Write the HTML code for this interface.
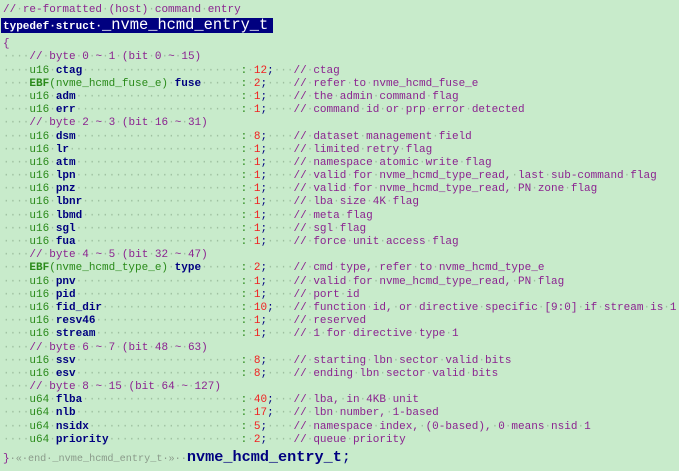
<!DOCTYPE html>
<html><head><meta charset="utf-8"><style>
body{margin:0;width:679px;height:471px;background:#c8ebcb;overflow:hidden;font-family:"Liberation Mono",monospace;font-size:11px;}
.w{position:absolute;left:3px;top:4px;}
.w>div{white-space:pre;}
.l{height:13.2px;line-height:13.2px;}
.c{color:#8b2390}
i{font-style:normal;color:#9dbf9f}
.t{color:#2a8a1a}
.tb{color:#2a8a1a;font-weight:bold}
.n{color:#000080;font-weight:bold}
.k{color:#2a8a1a}
.r{color:#f02020}
.s{color:#000080}
.hl{display:inline-block;background:#000080;color:#fff;height:15px;line-height:15px;padding-right:5px;margin-left:-2px;padding-left:2px}
.hl b{font-size:11px}
.big{font-size:15.4px;font-weight:normal}
.e{color:#8a9a8a;font-size:10.2px}
.bn{color:#000080;font-weight:bold;font-size:15.2px}
</style></head><body><div class="w">
<div class="l c">//<i>·</i>re-formatted<i>·</i>(host)<i>·</i>command<i>·</i>entry</div>
<div style="height:21px;padding-top:1px;box-sizing:border-box"><span class="hl"><b>typedef·struct·</b><span class="big">_nvme_hcmd_entry_t</span></span></div>
<div class="l c">{</div>
<div class="l"><i>····</i><span class="c">//<i>·</i>byte<i>·</i>0<i>·</i>~<i>·</i>1<i>·</i>(bit<i>·</i>0<i>·</i>~<i>·</i>15)</span></div>
<div class="l"><i>····</i><span class="t">u16</span><i>·</i><span class="n">ctag</span><i>························</i><span class="k">:</span><i>·</i><span class="r">12</span><span class="s">;</span><i>···</i><span class="c">//<i>·</i>ctag</span></div>
<div class="l"><i>····</i><span class="tb">EBF</span><span class="t">(nvme_hcmd_fuse_e)</span><i>·</i><span class="n">fuse</span><i>······</i><span class="k">:</span><i>·</i><span class="r">2</span><span class="s">;</span><i>····</i><span class="c">//<i>·</i>refer<i>·</i>to<i>·</i>nvme_hcmd_fuse_e</span></div>
<div class="l"><i>····</i><span class="t">u16</span><i>·</i><span class="n">adm</span><i>·························</i><span class="k">:</span><i>·</i><span class="r">1</span><span class="s">;</span><i>····</i><span class="c">//<i>·</i>the<i>·</i>admin<i>·</i>command<i>·</i>flag</span></div>
<div class="l"><i>····</i><span class="t">u16</span><i>·</i><span class="n">err</span><i>·························</i><span class="k">:</span><i>·</i><span class="r">1</span><span class="s">;</span><i>····</i><span class="c">//<i>·</i>command<i>·</i>id<i>·</i>or<i>·</i>prp<i>·</i>error<i>·</i>detected</span></div>
<div class="l"><i>····</i><span class="c">//<i>·</i>byte<i>·</i>2<i>·</i>~<i>·</i>3<i>·</i>(bit<i>·</i>16<i>·</i>~<i>·</i>31)</span></div>
<div class="l"><i>····</i><span class="t">u16</span><i>·</i><span class="n">dsm</span><i>·························</i><span class="k">:</span><i>·</i><span class="r">8</span><span class="s">;</span><i>····</i><span class="c">//<i>·</i>dataset<i>·</i>management<i>·</i>field</span></div>
<div class="l"><i>····</i><span class="t">u16</span><i>·</i><span class="n">lr</span><i>··························</i><span class="k">:</span><i>·</i><span class="r">1</span><span class="s">;</span><i>····</i><span class="c">//<i>·</i>limited<i>·</i>retry<i>·</i>flag</span></div>
<div class="l"><i>····</i><span class="t">u16</span><i>·</i><span class="n">atm</span><i>·························</i><span class="k">:</span><i>·</i><span class="r">1</span><span class="s">;</span><i>····</i><span class="c">//<i>·</i>namespace<i>·</i>atomic<i>·</i>write<i>·</i>flag</span></div>
<div class="l"><i>····</i><span class="t">u16</span><i>·</i><span class="n">lpn</span><i>·························</i><span class="k">:</span><i>·</i><span class="r">1</span><span class="s">;</span><i>····</i><span class="c">//<i>·</i>valid<i>·</i>for<i>·</i>nvme_hcmd_type_read,<i>·</i>last<i>·</i>sub-command<i>·</i>flag</span></div>
<div class="l"><i>····</i><span class="t">u16</span><i>·</i><span class="n">pnz</span><i>·························</i><span class="k">:</span><i>·</i><span class="r">1</span><span class="s">;</span><i>····</i><span class="c">//<i>·</i>valid<i>·</i>for<i>·</i>nvme_hcmd_type_read,<i>·</i>PN<i>·</i>zone<i>·</i>flag</span></div>
<div class="l"><i>····</i><span class="t">u16</span><i>·</i><span class="n">lbnr</span><i>························</i><span class="k">:</span><i>·</i><span class="r">1</span><span class="s">;</span><i>····</i><span class="c">//<i>·</i>lba<i>·</i>size<i>·</i>4K<i>·</i>flag</span></div>
<div class="l"><i>····</i><span class="t">u16</span><i>·</i><span class="n">lbmd</span><i>························</i><span class="k">:</span><i>·</i><span class="r">1</span><span class="s">;</span><i>····</i><span class="c">//<i>·</i>meta<i>·</i>flag</span></div>
<div class="l"><i>····</i><span class="t">u16</span><i>·</i><span class="n">sgl</span><i>·························</i><span class="k">:</span><i>·</i><span class="r">1</span><span class="s">;</span><i>····</i><span class="c">//<i>·</i>sgl<i>·</i>flag</span></div>
<div class="l"><i>····</i><span class="t">u16</span><i>·</i><span class="n">fua</span><i>·························</i><span class="k">:</span><i>·</i><span class="r">1</span><span class="s">;</span><i>····</i><span class="c">//<i>·</i>force<i>·</i>unit<i>·</i>access<i>·</i>flag</span></div>
<div class="l"><i>····</i><span class="c">//<i>·</i>byte<i>·</i>4<i>·</i>~<i>·</i>5<i>·</i>(bit<i>·</i>32<i>·</i>~<i>·</i>47)</span></div>
<div class="l"><i>····</i><span class="tb">EBF</span><span class="t">(nvme_hcmd_type_e)</span><i>·</i><span class="n">type</span><i>······</i><span class="k">:</span><i>·</i><span class="r">2</span><span class="s">;</span><i>····</i><span class="c">//<i>·</i>cmd<i>·</i>type,<i>·</i>refer<i>·</i>to<i>·</i>nvme_hcmd_type_e</span></div>
<div class="l"><i>····</i><span class="t">u16</span><i>·</i><span class="n">pnv</span><i>·························</i><span class="k">:</span><i>·</i><span class="r">1</span><span class="s">;</span><i>····</i><span class="c">//<i>·</i>valid<i>·</i>for<i>·</i>nvme_hcmd_type_read,<i>·</i>PN<i>·</i>flag</span></div>
<div class="l"><i>····</i><span class="t">u16</span><i>·</i><span class="n">pid</span><i>·························</i><span class="k">:</span><i>·</i><span class="r">1</span><span class="s">;</span><i>····</i><span class="c">//<i>·</i>port<i>·</i>id</span></div>
<div class="l"><i>····</i><span class="t">u16</span><i>·</i><span class="n">fid_dir</span><i>·····················</i><span class="k">:</span><i>·</i><span class="r">10</span><span class="s">;</span><i>···</i><span class="c">//<i>·</i>function<i>·</i>id,<i>·</i>or<i>·</i>directive<i>·</i>specific<i>·</i>[9:0]<i>·</i>if<i>·</i>stream<i>·</i>is<i>·</i>1</span></div>
<div class="l"><i>····</i><span class="t">u16</span><i>·</i><span class="n">resv46</span><i>······················</i><span class="k">:</span><i>·</i><span class="r">1</span><span class="s">;</span><i>····</i><span class="c">//<i>·</i>reserved</span></div>
<div class="l"><i>····</i><span class="t">u16</span><i>·</i><span class="n">stream</span><i>······················</i><span class="k">:</span><i>·</i><span class="r">1</span><span class="s">;</span><i>····</i><span class="c">//<i>·</i>1<i>·</i>for<i>·</i>directive<i>·</i>type<i>·</i>1</span></div>
<div class="l"><i>····</i><span class="c">//<i>·</i>byte<i>·</i>6<i>·</i>~<i>·</i>7<i>·</i>(bit<i>·</i>48<i>·</i>~<i>·</i>63)</span></div>
<div class="l"><i>····</i><span class="t">u16</span><i>·</i><span class="n">ssv</span><i>·························</i><span class="k">:</span><i>·</i><span class="r">8</span><span class="s">;</span><i>····</i><span class="c">//<i>·</i>starting<i>·</i>lbn<i>·</i>sector<i>·</i>valid<i>·</i>bits</span></div>
<div class="l"><i>····</i><span class="t">u16</span><i>·</i><span class="n">esv</span><i>·························</i><span class="k">:</span><i>·</i><span class="r">8</span><span class="s">;</span><i>····</i><span class="c">//<i>·</i>ending<i>·</i>lbn<i>·</i>sector<i>·</i>valid<i>·</i>bits</span></div>
<div class="l"><i>····</i><span class="c">//<i>·</i>byte<i>·</i>8<i>·</i>~<i>·</i>15<i>·</i>(bit<i>·</i>64<i>·</i>~<i>·</i>127)</span></div>
<div class="l"><i>····</i><span class="t">u64</span><i>·</i><span class="n">flba</span><i>························</i><span class="k">:</span><i>·</i><span class="r">40</span><span class="s">;</span><i>···</i><span class="c">//<i>·</i>lba,<i>·</i>in<i>·</i>4KB<i>·</i>unit</span></div>
<div class="l"><i>····</i><span class="t">u64</span><i>·</i><span class="n">nlb</span><i>·························</i><span class="k">:</span><i>·</i><span class="r">17</span><span class="s">;</span><i>···</i><span class="c">//<i>·</i>lbn<i>·</i>number,<i>·</i>1-based</span></div>
<div class="l"><i>····</i><span class="t">u64</span><i>·</i><span class="n">nsidx</span><i>·······················</i><span class="k">:</span><i>·</i><span class="r">5</span><span class="s">;</span><i>····</i><span class="c">//<i>·</i>namespace<i>·</i>index,<i>·</i>(0-based),<i>·</i>0<i>·</i>means<i>·</i>nsid<i>·</i>1</span></div>
<div class="l"><i>····</i><span class="t">u64</span><i>·</i><span class="n">priority</span><i>····················</i><span class="k">:</span><i>·</i><span class="r">2</span><span class="s">;</span><i>····</i><span class="c">//<i>·</i>queue<i>·</i>priority</span></div>
<div style="height:18px;line-height:18px;margin-top:1px"><span class="c">}</span><span class="e">·«·end·_nvme_hcmd_entry_t·»··</span><span class="bn">nvme_hcmd_entry_t</span><span class="s" style="font-size:15px">;</span></div>
</div></body></html>
